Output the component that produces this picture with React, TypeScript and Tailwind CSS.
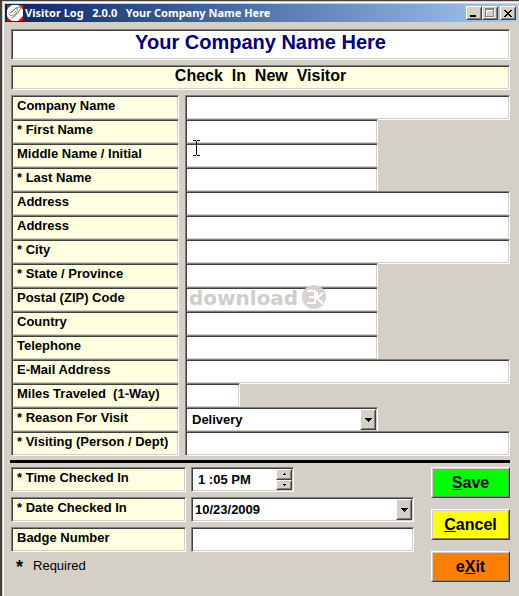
import { ReactNode, useState } from 'react';
import { clsx } from 'clsx';

// Classic double bevels: gray/dark on the top-left, light/white on the bottom-right
const sunken =
  'border border-t-[#808080] border-l-[#808080] border-r-white border-b-white shadow-[inset_1px_1px_0_#404040,inset_-1px_-1px_0_#d4d0c8]';
const raised =
  'border border-t-white border-l-white border-r-[#404040] border-b-[#404040] shadow-[inset_1px_1px_0_#d4d0c8,inset_-1px_-1px_0_#808080]';

type Field = {
  id: string;
  label: string;
  size: 'full' | 'medium' | 'small';
  options?: string[];
};

const fields: Field[] = [
  { id: 'company', label: 'Company Name', size: 'full' },
  { id: 'first', label: '* First Name', size: 'medium' },
  { id: 'middle', label: 'Middle Name / Initial', size: 'medium' },
  { id: 'last', label: '* Last Name', size: 'medium' },
  { id: 'address1', label: 'Address', size: 'full' },
  { id: 'address2', label: 'Address', size: 'full' },
  { id: 'city', label: '* City', size: 'full' },
  { id: 'state', label: '* State / Province', size: 'medium' },
  { id: 'zip', label: 'Postal (ZIP) Code', size: 'medium' },
  { id: 'country', label: 'Country', size: 'medium' },
  { id: 'phone', label: 'Telephone', size: 'medium' },
  { id: 'email', label: 'E-Mail Address', size: 'full' },
  { id: 'miles', label: 'Miles Traveled  (1-Way)', size: 'small' },
  { id: 'reason', label: '* Reason For Visit', size: 'medium', options: ['Delivery', 'Meeting', 'Interview'] },
  { id: 'visiting', label: '* Visiting (Person / Dept)', size: 'full' },
];

const widths = {
  full: 'w-full',
  medium: 'w-[193px]',
  small: 'w-[55px]',
};

function FieldLabel({ htmlFor, className, children }: { htmlFor: string; className?: string; children: ReactNode }) {
  return (
    <label
      htmlFor={htmlFor}
      className={clsx(sunken, 'block h-[25px] shrink-0 bg-[#ffffe1] pt-px pl-[5px] text-[13px] leading-[18px] font-bold whitespace-pre', className)}
    >
      {children}
    </label>
  );
}

function DropDown({ id, options, className }: { id: string; options: string[]; className?: string }) {
  return (
    <div className={clsx('relative', className)}>
      <select id={id} className={clsx(sunken, 'block h-[25px] w-full appearance-none bg-white text-[13px] font-bold outline-none', id === 'date' ? 'pl-[3px]' : 'pl-1.5')}>
        {options.map((option) => (
          <option key={option}>{option}</option>
        ))}
      </select>
      <span className={clsx(raised, 'pointer-events-none absolute top-0.5 right-0.5 bottom-0.5 flex w-4 items-center justify-center bg-[#d4d0c8]')}>
        <svg width="7" height="4" viewBox="0 0 7 4" shapeRendering="crispEdges">
          <path d="M0 0h7v1H0zM1 1h5v1H1zM2 2h3v1H2zM3 3h1v1H3z" />
        </svg>
      </span>
    </div>
  );
}

function TitleBar() {
  return (
    <header className="flex h-[18px] items-center bg-linear-to-r from-[#0a246a] to-[#a6caf0] px-0.5">
      <svg className="shrink-0" width="16" height="16" viewBox="0 0 16 16">
        <path fill="#f00" d="M0 0h16v16H0z" />
        <path fill="#fff" d="M5 0h6l3 2 2 3v6l-3 3-2 2H5l-3-2-2-3V5l2-3z" />
        <path fill="none" stroke="#888" strokeWidth="1" d="M2 9l2 2 3-1 5-4 2-3-1-1-4 1-5 5M6 5l3-2 2 1M7 8l4-4M5 13l3-2 2-3M3 8l4-3M9 9l3-2" />
      </svg>
      <h1 className="ml-0.5 flex-1 overflow-hidden font-['Noto_Sans','Open_Sans',sans-serif] text-[11px] leading-[18px] font-bold whitespace-pre text-white">
        {'Visitor Log   2.0.0   Your Company Name Here'}
      </h1>
      <button aria-label="Minimize" className={clsx(raised, 'flex h-3.5 w-4 shrink-0 items-center justify-center bg-[#d4d0c8]')}>
        <svg width="12" height="10" viewBox="0 0 12 10" shapeRendering="crispEdges">
          <path d="M2 7h6v2H2z" />
        </svg>
      </button>
      <button aria-label="Maximize" disabled className={clsx(raised, 'flex h-3.5 w-4 shrink-0 items-center justify-center bg-[#d4d0c8]')}>
        <svg width="12" height="10" viewBox="0 0 12 10" shapeRendering="crispEdges">
          <path fill="#fff" fillRule="evenodd" d="M2 1h9v9H2zM3 3v6h7V3z" />
          <path fill="#808080" fillRule="evenodd" d="M1 0h9v9H1zM2 2v6h7V2z" />
        </svg>
      </button>
      <button aria-label="Close" className={clsx(raised, 'ml-0.5 flex h-3.5 w-4 shrink-0 items-center justify-center bg-[#d4d0c8]')}>
        <svg width="8" height="7" viewBox="0 0 8 7" shapeRendering="crispEdges">
          <path d="M0 0h2v1H0zM6 0h2v1H6zM1 1h2v1H1zM5 1h2v1H5zM2 2h4v1H2zM3 3h2v1H3zM2 4h4v1H2zM1 5h2v1H1zM5 5h2v1H5zM0 6h2v1H0zM6 6h2v1H6z" />
        </svg>
      </button>
    </header>
  );
}

function Watermark() {
  return (
    <div className="pointer-events-none absolute -top-0.5 left-1 flex items-center gap-1 text-[#d0cec9]">
      <span className="font-['DejaVu_Sans',sans-serif] text-xl leading-6 font-bold">download</span>
      <svg width="25" height="25" viewBox="0 0 25 25">
        <circle cx="12" cy="12" r="12" fill="#d6d3d0" />
        <path fill="none" stroke="#fff" strokeWidth="2" d="M5 6h8v12H5M7 12h6M15 7v6M21 8l-6 5 6 6" />
      </svg>
    </div>
  );
}

function TextCursor() {
  return (
    <svg className="pointer-events-none absolute -bottom-3 left-2 z-10" width="7" height="16" viewBox="0 0 7 16" shapeRendering="crispEdges">
      <path d="M0 0h3v1H0zM4 0h3v1H4zM3 1h1v14H3zM0 15h3v1H0zM4 15h3v1H4z" />
    </svg>
  );
}

function SpinButton({ label, path, onClick }: { label: string; path: string; onClick: () => void }) {
  return (
    <button type="button" aria-label={label} onClick={onClick} className={clsx(raised, 'flex w-4 flex-1 items-center justify-center bg-[#d4d0c8]')}>
      <svg width="3" height="2" viewBox="0 0 3 2" shapeRendering="crispEdges">
        <path d={path} />
      </svg>
    </button>
  );
}

export default function App() {
  const [minutes, setMinutes] = useState(13 * 60 + 5);
  const hour = Math.floor(minutes / 60) % 12 || 12;
  const time = `${hour} :${String(minutes % 60).padStart(2, '0')} ${minutes >= 720 ? 'PM' : 'AM'}`;
  const step = (by: number) => setMinutes((minutes + by + 1440) % 1440);

  const action = 'h-[31px] w-full text-base font-bold';

  return (
    <div className="flex min-h-screen flex-col border-t border-l-2 border-[#404040] bg-[#d4d0c8] font-['Liberation_Sans',Arial,sans-serif] text-black">
      <div className="flex flex-1 flex-col border-t border-l border-[#d4d0c8]">
        <div className="flex-1 border-t border-l border-white pt-px pr-px pl-px">
          <TitleBar />

          <main className="pt-[7px] pr-2 pl-1.5">
            <h2 className={clsx(sunken, 'h-[31px] bg-white text-center text-xl leading-6 font-bold text-[#000080]')}>
              Your Company Name Here
            </h2>
            <h3 className={clsx(sunken, 'mt-[5px] h-[25px] bg-[#ffffe1] text-center text-base leading-5 font-bold whitespace-pre')}>
              {'Check  In  New  Visitor'}
            </h3>

            <form className="mt-[5px]" onSubmit={(e) => e.preventDefault()}>
              <div className="pt-px">
                {fields.map((field) => (
                  <div key={field.id} className="-mt-px flex gap-1.5">
                    <FieldLabel htmlFor={field.id} className="w-[168px]">
                      {field.label}
                    </FieldLabel>
                    <div className="relative flex-1">
                      {field.options ? (
                        <DropDown id={field.id} options={field.options} className={widths[field.size]} />
                      ) : (
                        <input id={field.id} type="text" className={clsx(sunken, 'block h-[25px] bg-white px-1.5 text-[13px] font-bold outline-none', widths[field.size])} />
                      )}
                      {field.id === 'first' && <TextCursor />}
                      {field.id === 'zip' && <Watermark />}
                    </div>
                  </div>
                ))}
              </div>

              <hr className="mt-1 -ml-px border-t-3 border-black" />

              <div className="mt-1 flex items-start justify-between gap-4">
                <div className="flex max-w-[403px] flex-1 flex-col gap-[5px]">
                  <div className="flex gap-[5px]">
                    <FieldLabel htmlFor="time" className="w-[175px]">* Time Checked In</FieldLabel>
                    <div className={clsx(sunken, 'flex h-[25px] w-[103px] bg-white p-px')}>
                      <input id="time" value={time} readOnly className="min-w-0 flex-1 pl-[5px] text-[13px] font-bold outline-none" />
                      <div className="flex flex-col">
                        <SpinButton label="Later" path="M1 0h1v1H1zM0 1h3v1H0z" onClick={() => step(1)} />
                        <SpinButton label="Earlier" path="M0 0h3v1H0zM1 1h1v1H1z" onClick={() => step(-1)} />
                      </div>
                    </div>
                  </div>
                  <div className="flex gap-[5px]">
                    <FieldLabel htmlFor="date" className="w-[175px]">* Date Checked In</FieldLabel>
                    <DropDown id="date" options={['10/23/2009']} className="flex-1" />
                  </div>
                  <div className="flex gap-[5px]">
                    <FieldLabel htmlFor="badge" className="w-[175px]">Badge Number</FieldLabel>
                    <input id="badge" type="text" className={clsx(sunken, 'h-[25px] min-w-0 flex-1 bg-white px-1.5 text-[13px] font-bold outline-none')} />
                  </div>
                  <p className="flex gap-2.5 pl-[5px] text-[13px] leading-[18px]">
                    <span className="text-lg leading-5 font-bold">*</span>
                    <span>Required</span>
                  </p>
                </div>

                <div className="flex w-[79px] shrink-0 flex-col gap-[11px]">
                  <button type="submit" className={clsx(raised, action, 'bg-[#00ff00]')}>
                    <u>S</u>ave
                  </button>
                  <button type="reset" className={clsx(raised, action, 'bg-[#ffff00]')}>
                    <u>C</u>ancel
                  </button>
                  <button type="button" className={clsx(raised, action, 'bg-[#ff8000]')}>
                    e<u>X</u>it
                  </button>
                </div>
              </div>
            </form>
          </main>
        </div>
      </div>
    </div>
  );
}
